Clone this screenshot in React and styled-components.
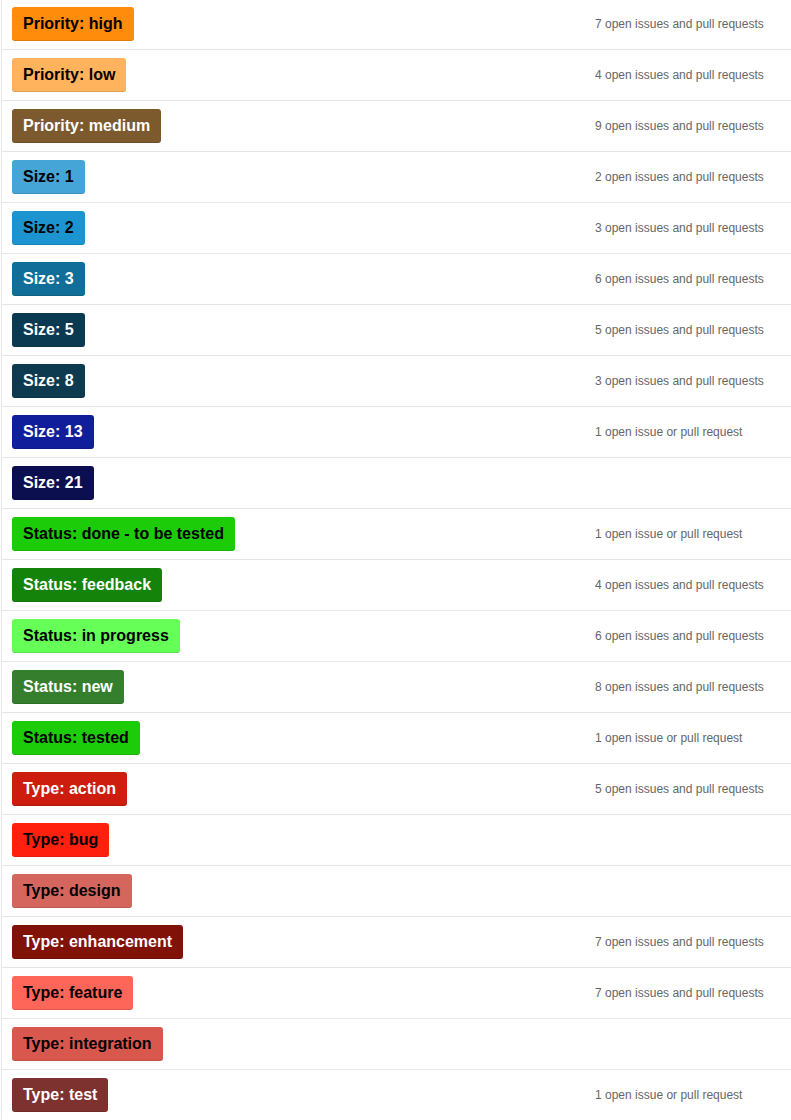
import React from "react";
import styled, { createGlobalStyle } from "styled-components";

const GlobalStyle = createGlobalStyle`
  html, body {
    margin: 0;
    padding: 0;
    background: #fff;
    overflow: hidden;
  }
  body {
    font-family: "Liberation Sans", Arial, Helvetica, sans-serif;
  }
`;

const List = styled.ul`
  list-style: none;
  margin: -1px 0 0 1px;
  padding: 0;
  width: 790px;
  border-left: 1px solid #e5e5e5;
  box-sizing: border-box;
`;

const Row = styled.li`
  display: grid;
  grid-template-columns: 583px 1fr;
  align-items: center;
  padding: 8px 0 8px 10px;
  border-bottom: 1px solid #e5e5e5;
`;

const Label = styled.span`
  justify-self: start;
  display: inline-block;
  height: 34px;
  line-height: 34px;
  padding: 0 11px;
  font-size: 16px;
  font-weight: bold;
  border-radius: 3px;
  box-shadow: inset 0 -1px 0 rgba(0, 0, 0, 0.12);
  background: ${(p) => p.$bg};
  color: ${(p) => (p.$light ? "#fff" : "#000")};
  white-space: nowrap;
`;

const Count = styled.span`
  font-size: 12px;
  color: #666;
  white-space: nowrap;
`;

const labels = [
  ["Priority: high", "#ff8c0a", false, 7],
  ["Priority: low", "#ffb35c", false, 4],
  ["Priority: medium", "#7c5a2e", true, 9],
  ["Size: 1", "#45a5d6", false, 2],
  ["Size: 2", "#1c94d0", false, 3],
  ["Size: 3", "#106e98", true, 6],
  ["Size: 5", "#093a52", true, 5],
  ["Size: 8", "#0d3a4f", true, 3],
  ["Size: 13", "#111e9c", true, 1],
  ["Size: 21", "#0b0f50", true, 0],
  ["Status: done - to be tested", "#1ccc08", false, 1],
  ["Status: feedback", "#148309", true, 4],
  ["Status: in progress", "#66ff58", false, 6],
  ["Status: new", "#357e2e", true, 8],
  ["Status: tested", "#1ccc08", false, 1],
  ["Type: action", "#cc1d0e", true, 5],
  ["Type: bug", "#ff200e", false, 0],
  ["Type: design", "#d5665e", false, 0],
  ["Type: enhancement", "#801208", true, 7],
  ["Type: feature", "#ff665a", false, 7],
  ["Type: integration", "#d9584d", false, 0],
  ["Type: test", "#7e322f", true, 1],
];

const countText = (n) => {
  if (!n) return "";
  if (n === 1) return "1 open issue or pull request";
  return `${n} open issues and pull requests`;
};

export default function App() {
  return (
    <>
      <GlobalStyle />
      <List>
        {labels.map(([name, bg, light, n]) => (
          <Row key={name}>
            <Label $bg={bg} $light={light}>
              {name}
            </Label>
            <Count>{countText(n)}</Count>
          </Row>
        ))}
      </List>
    </>
  );
}
